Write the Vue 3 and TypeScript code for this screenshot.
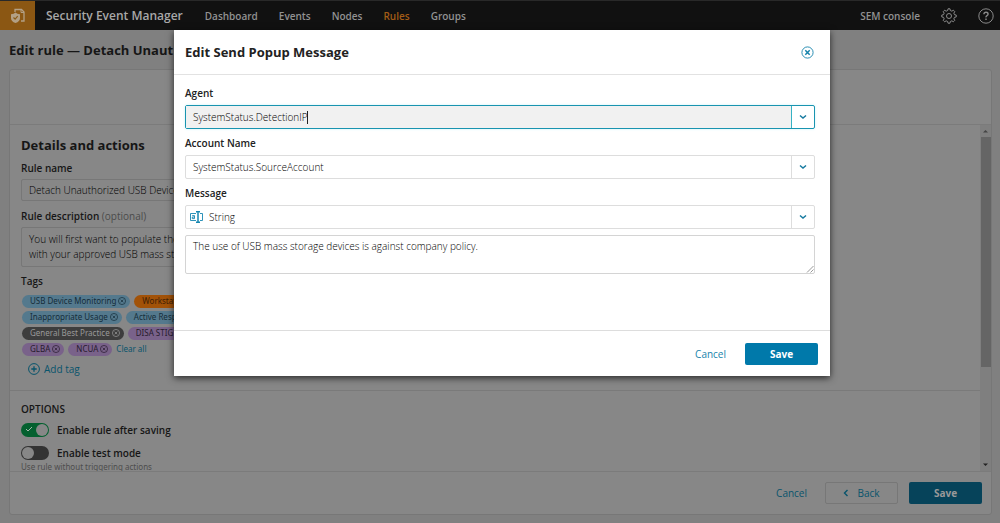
<script setup lang="ts">
import { ref } from 'vue'

interface Tag { label: string; tone: string }

const navItems = ['Dashboard', 'Events', 'Nodes', 'Rules', 'Groups']
const activeNav = 'Rules'
const tagRows: Tag[][] = [
  [{ label: 'USB Device Monitoring', tone: 'blue' }, { label: 'Workstation', tone: 'orange' }],
  [{ label: 'Inappropriate Usage', tone: 'blue' }, { label: 'Active Response', tone: 'blue' }],
  [{ label: 'General Best Practice', tone: 'gray' }, { label: 'DISA STIG', tone: 'purple' }],
  [{ label: 'GLBA', tone: 'purple' }, { label: 'NCUA', tone: 'purple' }],
]
const ruleName = ref('Detach Unauthorized USB Device')
const ruleDescription = ref('You will first want to populate the\nwith your approved USB mass storage')
const enabled = ref(true)
const testMode = ref(false)
const agent = ref('SystemStatus.DetectionIP')
const account = ref('SystemStatus.SourceAccount')
const messageType = ref('String')
const message = ref('The use of USB mass storage devices is against company policy.')
</script>

<template>
  <div class="app">
    <header class="topbar">
      <a class="logo" href="#" aria-label="Home">
        <svg width="16" height="16" viewBox="0 0 16 16">
          <path d="M5 4V1.500h6.500L14 4v9h-3" fill="none" stroke="#b3a085" stroke-width="1.300" />
          <path d="M11 1.500V4.500h3" fill="none" stroke="#b3a085" stroke-width="1" />
          <path d="M1 6.300Q4 6.300 5.500 4.500Q7 6.300 10 6.300V10Q10 13.500 5.500 15Q1 13.500 1 10Z" fill="#b3a085" />
          <path d="M3.500 9.500l1.600 1.600 2.600-3" fill="none" stroke="#8a5b18" stroke-width="1.200" />
        </svg>
      </a>
      <strong class="brand">Security Event Manager</strong>
      <nav class="nav">
        <a v-for="item in navItems" :key="item" href="#" :class="{ active: item === activeNav }">{{ item }}</a>
      </nav>
      <div class="tools">
        <span class="console">SEM console</span>
        <button class="icon-button" aria-label="Settings">
          <svg width="16" height="16" viewBox="0 0 16 16" fill="none" stroke="#8a8a8a" stroke-width="1">
            <path d="M6.700 2.500 7 .8h2l.3 1.700 1.600.7 1.400-1 1.500 1.500-1 1.400.7 1.600 1.700.3v2l-1.700.3-.7 1.600 1 1.400-1.500 1.500-1.400-1-1.600.7-.3 1.700H7l-.3-1.700-1.600-.7-1.400 1-1.500-1.500 1-1.400-.7-1.600L.8 9V7l1.700-.3.7-1.600-1-1.400 1.500-1.500 1.400 1z" />
            <circle cx="8" cy="8" r="2.500" />
          </svg>
        </button>
        <button class="icon-button" aria-label="Help">
          <svg width="16" height="16" viewBox="0 0 16 16" fill="none" stroke="#8a8a8a">
            <circle cx="8" cy="8" r="7.200" />
            <path d="M5.900 6.200Q6 4.300 8 4.300T10.100 6.100Q10.100 7.100 9 7.700T8 9.400M8 10.600v1.400" stroke-width="1.400" />
          </svg>
        </button>
      </div>
    </header>

    <main class="page">
      <h1>Edit rule — Detach Unaut</h1>
      <section class="panel">
        <div class="steps"></div>
        <div class="body">
          <div class="content">
            <div class="details">
              <h2>Details and actions</h2>
              <label for="rule-name">Rule name</label>
              <input id="rule-name" v-model="ruleName" type="text" class="dim-input">
              <label for="rule-desc">Rule description <span class="optional">(optional)</span></label>
              <textarea id="rule-desc" v-model="ruleDescription" class="dim-input dim-area"></textarea>
              <h3>Tags</h3>
              <div class="tags">
                <div v-for="(row, index) in tagRows" :key="index" class="tag-row">
                  <span v-for="tag in row" :key="tag.label" class="tag" :class="tag.tone">
                    {{ tag.label }}
                    <button :aria-label="'Remove ' + tag.label">
                      <svg width="8" height="8" viewBox="0 0 9 9" fill="none" stroke="currentColor" stroke-width="0.800">
                        <circle cx="4.500" cy="4.500" r="4" /><path d="m3 3 3 3m0-3-3 3" />
                      </svg>
                    </button>
                  </span>
                  <button v-if="index === tagRows.length - 1" class="clear">Clear all</button>
                </div>
              </div>
              <button class="add-tag">
                <svg width="12" height="12" viewBox="0 0 12 12" fill="none" stroke="currentColor">
                  <circle cx="6" cy="6" r="5.400" /><path d="M6 3.300v5.400M3.300 6h5.400" stroke-width="1.300" />
                </svg>
                Add tag
              </button>
            </div>
            <div class="options">
              <h4>OPTIONS</h4>
              <label class="toggle"><input v-model="enabled" type="checkbox">
                <span class="track"><svg width="8" height="7" viewBox="0 0 8 7"><path d="m1 3 2 2 4-4" fill="none" stroke="#a5b8ac" /></svg></span>
                Enable rule after saving
              </label>
              <label class="toggle"><input v-model="testMode" type="checkbox">
                <span class="track"></span>
                Enable test mode
              </label>
              <p>Use rule without triggering actions</p>
            </div>
          </div>
          <div class="scrollbar" aria-hidden="true">
            <svg width="9" height="12" viewBox="0 0 9 12"><path d="M2 7.500 4.500 5 7 7.500z" fill="#444" /></svg>
            <div class="thumb"></div>
            <svg width="9" height="12" viewBox="0 0 9 12"><path d="M2 4.500 4.500 7 7 4.500z" fill="#222" /></svg>
          </div>
        </div>
        <footer class="panel-footer">
          <button class="link dim">Cancel</button>
          <button class="back">
            <svg width="6" height="8" viewBox="0 0 6 8"><path d="M4.500 1 1.500 4l3 3" fill="none" stroke="currentColor" stroke-width="1.400" /></svg>
            Back
          </button>
          <button class="save dim">Save</button>
        </footer>
      </section>
    </main>

    <div class="overlay">
      <form class="dialog" role="dialog" aria-labelledby="dialog-title" @submit.prevent>
        <header class="dialog-header">
          <h2 id="dialog-title">Edit Send Popup Message</h2>
          <button type="button" class="close" aria-label="Close">
            <svg width="13" height="13" viewBox="0 0 13 13" fill="none" stroke="#1482ab">
              <circle cx="6.500" cy="6.500" r="5.600" stroke-width="0.900" /><path d="m4.300 4.300 4.400 4.400m0-4.400L4.300 8.700" stroke-width="1.500" />
            </svg>
          </button>
        </header>
        <div class="dialog-body">
          <label for="agent">Agent</label>
          <div class="combo focused">
            <div class="combo-text"><input id="agent" v-model="agent" type="text"><span class="caret"></span></div>
            <button type="button" aria-label="Show agents"><svg width="8" height="6" viewBox="0 0 8 6"><path d="m1 1.500 3 2.500 3-2.500" /></svg></button>
          </div>
          <label for="account">Account Name</label>
          <div class="combo">
            <div class="combo-text"><input id="account" v-model="account" type="text"></div>
            <button type="button" aria-label="Show accounts"><svg width="8" height="6" viewBox="0 0 8 6"><path d="m1 1.500 3 2.500 3-2.500" /></svg></button>
          </div>
          <label for="message-type">Message</label>
          <div class="combo">
            <div class="combo-text with-icon">
              <svg width="13" height="12" viewBox="0 0 13 12" fill="none" stroke="#1687b1">
                <path d="M6 2.500H.5v7H6M10 2.500h2.500v7H10" stroke-width="0.900" />
                <path d="M6 .7h1.300L8 1.300 8.700.7H10M8 1v10M6 11.300h1.300l.7-.6.7.6H10" stroke-width="1.500" />
                <path d="M2.200 4.600h2.300v3H2.300V6h2.200" stroke-width="0.900" />
              </svg>
              <input id="message-type" v-model="messageType" type="text">
            </div>
            <button type="button" aria-label="Show message types"><svg width="8" height="6" viewBox="0 0 8 6"><path d="m1 1.500 3 2.500 3-2.500" /></svg></button>
          </div>
          <div class="message-box">
            <textarea v-model="message" class="message" aria-label="Message text"></textarea>
            <svg class="grip" width="8" height="8" viewBox="0 0 8 8"><path d="M1 7.500 7.500 1M4.500 7.500l3-3" fill="none" stroke="#999" /></svg>
          </div>
        </div>
        <footer class="dialog-footer">
          <button type="button" class="link">Cancel</button>
          <button type="submit" class="save">Save</button>
        </footer>
      </form>
    </div>
  </div>
</template>

<style>
body { margin: 0; overflow: hidden; }
</style>

<style scoped>
* { box-sizing: border-box; }
.app {
  position: relative;
  display: flex;
  flex-direction: column;
  height: 100vh;
  background: #808080;
  color: #161616;
  font: 10px/16px "Open Sans", "Noto Sans", sans-serif;
}
button, input, textarea { font: inherit; color: inherit; }
input, textarea { font-weight: 300; }
button { padding: 0; border: 0; background: none; }
a { color: inherit; text-decoration: none; }
h1, h2, h3, h4, p { margin: 0; }
h1, h2 { font-size: 13px; line-height: 20px; font-weight: 700; }
svg { display: block; flex: none; }

.topbar { display: flex; align-items: center; flex: none; height: 30px; background: #111; border-top: 1px solid #292929; color: #929292; font-weight: 600; }
.logo { display: grid; place-items: center; width: 35px; height: 100%; background: #8b5713; }
.brand { margin-left: 11px; font-size: 12px; font-weight: 600; color: #a8a8a8; white-space: nowrap; }
.nav { display: flex; gap: 21px; margin-left: 22px; }
.nav .active { color: #a35c16; }
.tools { display: flex; align-items: center; gap: 21px; margin-left: auto; padding-right: 6px; }

.page { display: flex; flex-direction: column; flex: 1; min-height: 0; padding: 0 8px 8px 9px; }
h1 { padding: 10px 0 9px; white-space: nowrap; }
.panel { display: flex; flex-direction: column; flex: 1; min-height: 0; border: 1px solid #777; border-radius: 3px; background: #878787; }
.steps { flex: none; height: 55px; border-bottom: 1px solid #7b7b7b; }
.body { display: flex; flex: 1; min-height: 0; }
.content { flex: 1; overflow: hidden; }
.details { padding: 10px 11px 13px; border-bottom: 1px solid #7a7a7a; }
.details h2 { margin-bottom: 5px; }
.details label { display: block; font-weight: 600; }
.details .optional { font-weight: 400; color: #4b4b4b; }
.dim-input { display: block; width: 260px; height: 22px; margin: 3px 0 7px; padding: 0 7px; border: 1px solid #777; border-radius: 2px; background: transparent; color: #000; outline: 0; }
.dim-area { height: 40px; margin-bottom: 6px; padding: 4px 7px; resize: none; overflow: hidden; line-height: 15px; }
.details h3 { font-size: 10px; font-weight: 600; }
.tags { margin-top: 4px; font-family: "Noto Sans", "Open Sans", sans-serif; font-size: 8px; }
.tag-row { display: flex; align-items: center; gap: 4px; height: 16px; white-space: nowrap; }
.tag { display: flex; align-items: center; gap: 2px; height: 13px; margin-left: 1px; padding: 0 4px 0 8px; border-radius: 7px; color: #152d3a; }
.tag + .tag { margin-left: 0; }
.blue { background: #54798d; }
.orange { background: #a25208; color: #402006; }
.gray { background: #3d3d3d; color: #999; }
.purple { background: #79628a; color: #271b2d; }
.clear { color: #08546c; }
.add-tag { display: flex; align-items: center; gap: 4px; margin: 4px 0 0 7px; color: #08546c; }

.options { padding: 10px 11px; }
.options h4 { margin-bottom: 5px; font-size: 10px; font-weight: 600; }
.toggle { position: relative; display: flex; align-items: center; gap: 8px; height: 15px; margin-bottom: 8px; font-weight: 600; }
.toggle input { position: absolute; opacity: 0; margin: 0; }
.track { display: flex; align-items: center; width: 28px; height: 14px; padding: 1px; border-radius: 7px; background: #333; }
.track svg { margin: 0 auto; }
.track::after { content: ""; width: 12px; height: 12px; border-radius: 50%; background: #878787; }
input:checked + .track { background: #04602f; }
.options p { margin-top: -7px; font-family: "Noto Sans", "Open Sans", sans-serif; font-size: 8px; line-height: 12px; color: #4d4d4d; }
.scrollbar { display: flex; flex-direction: column; width: 11px; background: #7f7f7f; align-items: center; }
.thumb { width: 10px; height: 230px; background: #656565; margin-bottom: auto; }
.panel-footer { display: flex; align-items: center; justify-content: flex-end; flex: none; height: 43px; padding-right: 9px; border-top: 1px solid #7b7b7b; }
.link { color: #1683ab; }
.link.dim { color: #08546c; }
.save { width: 73px; height: 22px; margin-left: 19px; border-radius: 2px; background: #0079aa; color: #fff; font-weight: 700; }
.save.dim { margin-left: 11px; background: #06435a; color: #999; }
.back { display: flex; align-items: center; justify-content: center; gap: 8px; width: 73px; height: 22px; margin-left: 18px; border: 1px solid #777; border-radius: 2px; color: #08546c; }

.overlay { position: absolute; top: 30px; left: 0; right: 0; display: flex; justify-content: center; padding-left: 4px; }
.dialog { display: flex; flex-direction: column; width: 66%; max-width: 656px; height: 346px; background: #fff; color: #222; box-shadow: 0 2px 7px rgba(0, 0, 0, 0.700); }
.dialog-header { display: flex; align-items: center; justify-content: space-between; height: 45px; padding: 0 16px 0 11px; border-bottom: 1px solid #e2e2e2; }
.dialog-body { flex: 1; padding: 10px 15px 0 11px; }
.dialog-body label { display: block; margin-bottom: 4px; font-weight: 600; line-height: 16px; }
.combo { display: flex; height: 24px; margin-bottom: 6px; border: 1px solid #ddd; border-radius: 2px; color: #000; }
.combo-text { position: relative; display: flex; align-items: center; flex: 1; padding-left: 7px; }
.combo input { flex: 1; min-width: 0; padding: 0; border: 0; outline: 0; background: transparent; }
.combo button { display: grid; place-items: center; width: 23px; border-left: 1px solid #ddd; }
.combo button path { fill: none; stroke: #167aa0; stroke-width: 1.500; }
.focused { border-color: #1994b0; box-shadow: 0 0 3px #d0f4fa; }
.focused .combo-text { background: #f1f1f1; }
.focused button { border-color: #36b2c4; }
.caret { position: absolute; left: 121px; width: 1px; height: 13px; background: #222; }
.with-icon { padding-left: 4px; gap: 6px; }
.message-box { position: relative; }
.message { display: block; width: 100%; height: 39px; padding: 2px 7px; border: 1px solid #d4d4d4; border-radius: 2px; color: #000; outline: 0; resize: none; }
.grip { position: absolute; right: 1px; bottom: 1px; }
.dialog-footer { display: flex; align-items: center; justify-content: flex-end; height: 46px; padding-right: 12px; border-top: 1px solid #ddd; }
</style>
